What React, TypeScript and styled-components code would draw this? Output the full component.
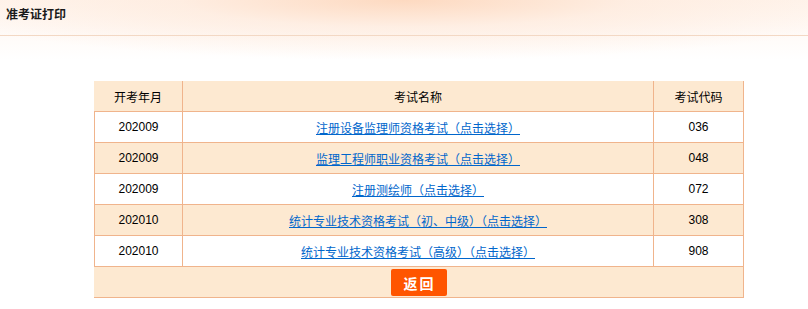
import React from "react";
import styled, { createGlobalStyle } from "styled-components";

const Global = createGlobalStyle`
  html, body { margin: 0; padding: 0; background: #fff; }
  body {
    font-family: "Liberation Sans", "Noto Sans CJK SC", sans-serif;
    font-size: 12px;
    color: #000;
  }
`;

const BORDER = "#f0b48c";
const PEACH = "#fde9d1";

const Glow = styled.div`
  height: 60px;
  background:
    radial-gradient(ellipse 62% 100% at 50% 0%, rgba(253, 216, 190, 0.95) 0%, rgba(254, 234, 220, 0.7) 45%, rgba(255, 255, 255, 0) 100%),
    linear-gradient(#fff5ee, #ffffff);
`;

const TitleBar = styled.div`
  height: 35px;
  line-height: 31px;
  padding-left: 6px;
  border-bottom: 1px solid #f3d8c4;
  font-weight: bold;
  font-size: 12px;
  color: #1a1a1a;
`;

const Table = styled.table`
  margin: 21px 0 0 94px;
  width: 650px;
  border-collapse: separate;
  border-spacing: 0;
  table-layout: fixed;
`;

const HeadCell = styled.th<{ $w: number }>`
  box-sizing: border-box;
  width: ${(p) => p.$w}px;
  height: 31px;
  padding: 0;
  font-weight: normal;
  font-size: 12px;
  background: ${PEACH};
  border-right: 1px solid ${BORDER};
  border-bottom: 1px solid ${BORDER};
  text-align: center;
`;

const Row = styled.tr<{ $alt: boolean }>`
  background: ${(p) => (p.$alt ? PEACH : "#ffffff")};
`;

const Cell = styled.td<{ $first?: boolean }>`
  box-sizing: border-box;
  height: 31px;
  padding: 0;
  text-align: center;
  border-right: 1px solid ${BORDER};
  border-bottom: 1px solid ${BORDER};
  border-left: ${(p) => (p.$first ? `1px solid ${BORDER}` : "none")};
  font-size: 12px;
`;

const ExamLink = styled.a`
  color: #0066cc;
  text-decoration: underline;
  cursor: pointer;
`;

const FootCell = styled.td`
  box-sizing: border-box;
  height: 31px;
  padding: 0;
  background: ${PEACH};
  border-right: 1px solid ${BORDER};
  border-bottom: 1px solid ${BORDER};
  vertical-align: top;
`;

const BackButton = styled.button`
  display: block;
  width: 56px;
  height: 27px;
  margin: 2px auto 0;
  border: none;
  border-radius: 2px;
  background: #ff5500;
  color: #fff;
  font-family: "Noto Sans CJK SC", sans-serif;
  font-size: 14px;
  font-weight: bold;
  letter-spacing: 2px;
  padding: 0 0 0 2px;
  cursor: pointer;
`;

const rows = [
  { ym: "202009", name: "注册设备监理师资格考试（点击选择）", code: "036" },
  { ym: "202009", name: "监理工程师职业资格考试（点击选择）", code: "048" },
  { ym: "202009", name: "注册测绘师（点击选择）", code: "072" },
  { ym: "202010", name: "统计专业技术资格考试（初、中级）（点击选择）", code: "308" },
  { ym: "202010", name: "统计专业技术资格考试（高级）（点击选择）", code: "908" },
];

export default function App() {
  return (
    <>
      <Global />
      <Glow>
        <TitleBar>准考证打印</TitleBar>
      </Glow>
      <Table>
        <thead>
          <tr>
            <HeadCell $w={89}>开考年月</HeadCell>
            <HeadCell $w={471}>考试名称</HeadCell>
            <HeadCell $w={90}>考试代码</HeadCell>
          </tr>
        </thead>
        <tbody>
          {rows.map((r, i) => (
            <Row key={i} $alt={i % 2 === 1}>
              <Cell $first>{r.ym}</Cell>
              <Cell>
                <ExamLink>{r.name}</ExamLink>
              </Cell>
              <Cell>{r.code}</Cell>
            </Row>
          ))}
          <tr>
            <FootCell colSpan={3}>
              <BackButton>返回</BackButton>
            </FootCell>
          </tr>
        </tbody>
      </Table>
    </>
  );
}
